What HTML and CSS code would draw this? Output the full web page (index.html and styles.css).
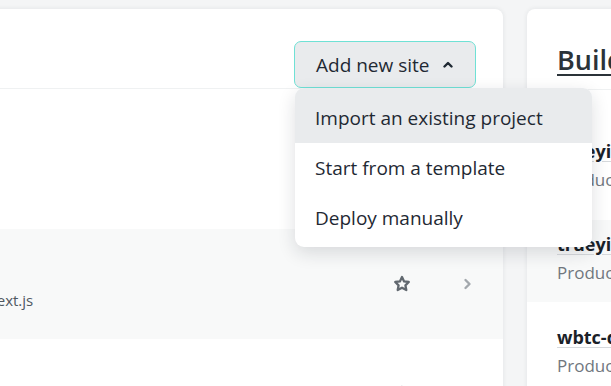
FILE: index.html
```html
<!DOCTYPE html>
<html lang="en">
<head>
    <meta charset="UTF-8">
    <meta name="viewport" content="width=device-width, initial-scale=1.0">
    <title>Sites</title>
    <link rel="stylesheet" href="styles.css">
</head>
<body>

    <div class="page">

        <!-- Sites list -->
        <section class="card sites">
            <div class="sites-head">
                <h2 class="sites-title">Sites</h2>

                <div class="add-site">
                    <button class="add-btn" type="button">
                        Add new site
                        <svg class="caret" width="10" height="7" viewBox="0 0 10 7">
                            <polyline points="1.5,5.5 5,2 8.5,5.5" fill="none" stroke="#1f2933" stroke-width="2.4" stroke-linecap="round" stroke-linejoin="round"/>
                        </svg>
                    </button>

                    <!-- Dropdown (open) -->
                    <ul class="menu">
                        <li class="menu-item active">Import an existing project</li>
                        <li class="menu-item">Start from a template</li>
                        <li class="menu-item">Deploy manually</li>
                    </ul>
                </div>
            </div>

            <div class="site-list">
                <div class="site-row">
                    <div class="site-info">
                        <div class="site-name">trueyield-app</div>
                        <div class="site-meta">Manual deploys</div>
                    </div>
                    <div class="site-actions">
                        <svg class="star" width="18" height="18" viewBox="0 0 18 18">
                            <polygon points="9,2 11.1,6.4 15.8,7 12.4,10.3 13.3,15 9,12.7 4.7,15 5.6,10.3 2.2,7 6.9,6.4" fill="none" stroke="#61686f" stroke-width="2.3" stroke-linejoin="round"/>
                        </svg>
                        <svg class="chev" width="9" height="12" viewBox="0 0 9 12">
                            <polyline points="2.5,2 6.5,6 2.5,10" fill="none" stroke="#a3a8ad" stroke-width="2.4" stroke-linecap="round" stroke-linejoin="round"/>
                        </svg>
                    </div>
                </div>

                <div class="site-row hover">
                    <div class="site-info">
                        <div class="site-name">trueyield-docs</div>
                        <div class="site-meta">Deploys from GitHub. Owner: TrueYield. Next.js</div>
                    </div>
                    <div class="site-actions">
                        <svg class="star" width="18" height="18" viewBox="0 0 18 18">
                            <polygon points="9,2 11.1,6.4 15.8,7 12.4,10.3 13.3,15 9,12.7 4.7,15 5.6,10.3 2.2,7 6.9,6.4" fill="none" stroke="#61686f" stroke-width="2.3" stroke-linejoin="round"/>
                        </svg>
                        <svg class="chev" width="9" height="12" viewBox="0 0 9 12">
                            <polyline points="2.5,2 6.5,6 2.5,10" fill="none" stroke="#a3a8ad" stroke-width="2.4" stroke-linecap="round" stroke-linejoin="round"/>
                        </svg>
                    </div>
                </div>

                <div class="site-row">
                    <div class="site-info">
                        <div class="site-name">wbtc-dashboard</div>
                        <div class="site-meta">Manual deploys</div>
                    </div>
                    <div class="site-actions">
                        <svg class="star" width="18" height="18" viewBox="0 0 18 18">
                            <polygon points="9,2 11.1,6.4 15.8,7 12.4,10.3 13.3,15 9,12.7 4.7,15 5.6,10.3 2.2,7 6.9,6.4" fill="none" stroke="#61686f" stroke-width="2.3" stroke-linejoin="round"/>
                        </svg>
                        <svg class="chev" width="9" height="12" viewBox="0 0 9 12">
                            <polyline points="2.5,2 6.5,6 2.5,10" fill="none" stroke="#a3a8ad" stroke-width="2.4" stroke-linecap="round" stroke-linejoin="round"/>
                        </svg>
                    </div>
                </div>
            </div>
        </section>

        <!-- Recent builds -->
        <aside class="card builds">
            <h2 class="builds-title">Builds</h2>

            <ul class="build-list">
                <li class="build">
                    <a class="build-name">trueyield-app</a>
                    <div class="build-meta">Production: main@8f2c1d0</div>
                </li>
                <li class="build hover">
                    <a class="build-name">trueyield-docs</a>
                    <div class="build-meta">Production: main@41ab9e2</div>
                </li>
                <li class="build">
                    <a class="build-name">wbtc-dashboard</a>
                    <div class="build-meta">Production: main@c7d03f5</div>
                </li>
            </ul>
        </aside>

    </div>

</body>
</html>
```

FILE: styles.css
```css
/* General Styles */
body {
    font-family: 'Open Sans', 'Noto Sans', sans-serif;
    background-color: #f4f5f6;
    color: #1f2933;
    margin: 0;
    padding: 0;
    overflow: hidden;
}

ul {
    list-style: none;
    margin: 0;
    padding: 0;
}

.page {
    display: flex;
    gap: 24px;
    padding-top: 9px;
    margin-left: -322px; /* viewport shows the right part of the sites card */
}

.card {
    flex: none;
    background-color: #fff;
    border-radius: 8px;
    box-shadow: 0 0 5px rgba(30, 40, 50, 0.09);
}

/* Sites card */
.sites {
    width: 825px;
    height: 420px;
}

.sites-head {
    display: flex;
    justify-content: space-between;
    align-items: flex-end;
    padding: 32px 27px 0 24px;
    border-bottom: 1px solid #eff1f2;
}

.sites-title {
    margin: 0 0 10px;
    font-size: 24px;
    font-weight: 600;
}

.add-site {
    position: relative;
}

.add-btn {
    display: flex;
    align-items: center;
    gap: 14px;
    width: 182px;
    height: 47px;
    padding: 0 21px;
    font-family: inherit;
    font-size: 19px;
    color: #1f2933;
    background-color: #e9ebed;
    border: 1px solid #6fe1d5;
    border-radius: 7px;
}

.menu {
    position: absolute;
    top: 100%;
    left: 1px;
    width: 297px;
    padding-bottom: 4px;
    background-color: #fff;
    border-radius: 9px;
    box-shadow: 0 6px 18px rgba(20, 30, 40, 0.14);
    overflow: hidden;
    z-index: 10;
}

.menu-item {
    height: 50px;
    line-height: 50px;
    padding: 0 20px;
    font-size: 19px;
    color: #1f2933;
}

.menu-item.active {
    height: 55px;
    line-height: 60px;
    background-color: #e9ebed;
}

/* Site rows */
.site-list {
    padding-top: 30px;
}

.site-row {
    display: flex;
    align-items: center;
    justify-content: space-between;
    height: 110px;
    padding: 0 31px 0 24px;
}

.site-row.hover {
    background-color: #f8f9f9;
}

.site-name {
    font-size: 18px;
    font-weight: 600;
    line-height: 26px;
}

.site-meta {
    font-size: 15px;
    line-height: 24px;
    color: #4f5861;
    margin-top: 6px;
}

.site-actions {
    display: flex;
    align-items: center;
    gap: 52px;
}

/* Builds card */
.builds {
    width: 400px;
    height: 420px;
}

.builds-title {
    margin: 0;
    padding: 34px 30px 12px;
    font-size: 27px;
    font-weight: 600;
    line-height: 34px;
    color: #2b3339;
    text-decoration: underline;
    text-decoration-thickness: 2px;
    text-underline-offset: 4px;
    border-bottom: 1px solid #eff1f2;
}

.build-list {
    display: flex;
    flex-direction: column;
    gap: 11px;
    padding-top: 37px;
}

.build {
    height: 82px;
    padding: 11px 30px 0;
    box-sizing: border-box;
}

.build.hover {
    background-color: #f8f9f9;
}

.build-name {
    display: inline-block;
    font-size: 18px;
    font-weight: 700;
    line-height: 26px;
    color: #1a2128;
    text-decoration: underline;
    text-decoration-color: #d6d9dc;
    text-underline-offset: 3px;
}

.build-meta {
    font-size: 17px;
    line-height: 26px;
    margin-top: 3px;
    color: #70777e;
}
```
